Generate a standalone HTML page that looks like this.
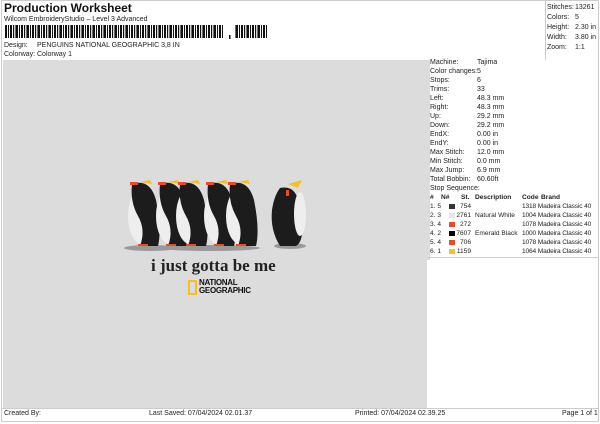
<!DOCTYPE html>
<html><head><style>
*{margin:0;padding:0;box-sizing:border-box}
body{width:600px;height:424px;background:#fff;font-family:"Liberation Sans",sans-serif;font-size:7px;color:#222;position:relative;overflow:hidden}
.a{position:absolute;white-space:nowrap}
.r{position:absolute;left:430px;white-space:nowrap;line-height:9px}
.r span{position:absolute;left:47px}
.t{font-size:6.6px}
</style></head><body>
<div class="a" style="left:1px;top:0;width:598px;height:422px;border:1px solid #ccc"></div>
<div class="a" style="left:4px;top:1px;font-size:12px;font-weight:bold;color:#111">Production Worksheet</div>
<div class="a" style="left:4px;top:16px;font-size:7px">Wilcom EmbroideryStudio – Level 3 Advanced</div>
<svg class="a" style="left:5px;top:25px" width="262" height="15">
<defs><pattern id="b" width="11" height="13" patternUnits="userSpaceOnUse">
<rect x="0" width="2" height="13" fill="#111"/><rect x="3" width="1" height="13" fill="#111"/><rect x="5" width="2" height="13" fill="#111"/><rect x="8" width="1" height="13" fill="#111"/><rect x="9.8" width="0.8" height="13" fill="#111"/></pattern></defs>
<rect x="0" y="0" width="218" height="13" fill="url(#b)"/>
<rect x="224" y="10" width="1.5" height="4" fill="#111"/>
<rect x="230" y="0" width="32" height="13" fill="url(#b)"/>
</svg>
<div class="a" style="left:4px;top:42px">Design:</div>
<div class="a" style="left:37px;top:42px">PENGUINS NATIONAL GEOGRAPHIC 3,8 IN</div>
<div class="a" style="left:4px;top:51px">Colorway:</div>
<div class="a" style="left:37px;top:51px">Colorway 1</div>
<div class="a" style="left:545px;top:0;width:54px;height:60px;border-left:1px solid #ccc"></div>
<div class="a" style="left:547px;top:3px;line-height:10px">Stitches:<br>Colors:<br>Height:<br>Width:<br>Zoom:</div>
<div class="a" style="left:575px;top:3px;line-height:10px">13261<br>5<br>2.30 in<br>3.80 in<br>1:1</div>
<div class="a" style="left:3px;top:60px;width:424px;height:348px;background:#dcdcdc"></div>
<div class="a" style="left:427px;top:60px;width:3px;height:200px;background:#dcdcdc"></div>
<div class="a" style="left:2px;top:408px;width:596px;height:1px;background:#ccc"></div>
<div class="a" style="left:4px;top:410px">Created By:</div>
<div class="a" style="left:149px;top:410px">Last Saved: 07/04/2024 02.01.37</div>
<div class="a" style="left:355px;top:410px">Printed: 07/04/2024 02.39.25</div>
<div class="a" style="left:562px;top:410px">Page 1 of 1</div>
<div class="r" style="top:58px">Machine:<span>Tajima</span></div>
<div class="r" style="top:67px">Color changes:<span>5</span></div>
<div class="r" style="top:76px">Stops:<span>6</span></div>
<div class="r" style="top:85px">Trims:<span>33</span></div>
<div class="r" style="top:94px">Left:<span>48.3 mm</span></div>
<div class="r" style="top:103px">Right:<span>48.3 mm</span></div>
<div class="r" style="top:112px">Up:<span>29.2 mm</span></div>
<div class="r" style="top:121px">Down:<span>29.2 mm</span></div>
<div class="r" style="top:130px">EndX:<span>0.00 in</span></div>
<div class="r" style="top:139px">EndY:<span>0.00 in</span></div>
<div class="r" style="top:148px">Max Stitch:<span>12.0 mm</span></div>
<div class="r" style="top:157px">Min Stitch:<span>0.0 mm</span></div>
<div class="r" style="top:166px">Max Jump:<span>6.9 mm</span></div>
<div class="r" style="top:175px">Total Bobbin:<span>60.60ft</span></div>
<div class="r" style="top:184px">Stop Sequence:</div>
<div class="a t" style="left:428px;top:193px;width:170px;line-height:9px">
<div style="position:relative;height:9px;font-weight:bold;text-decoration:underline"><span class="a" style="left:2px">#</span><span class="a" style="left:13px">N#</span><span class="a" style="left:33px">St.</span><span class="a" style="left:47px">Description</span><span class="a" style="left:94px">Code</span><span class="a" style="left:113px">Brand</span></div>
</div>
<div class="a t" style="left:430px;top:202px;line-height:9px">1. 5<br>2. 3<br>3. 4<br>4. 2<br>5. 4<br>6. 1</div>
<div class="a" style="left:449px;top:204px;width:6px;height:5px;background:#333"></div>
<div class="a" style="left:449px;top:213px;width:6px;height:5px;background:#e4e6ee"></div>
<div class="a" style="left:449px;top:222px;width:6px;height:5px;background:#e84a2a"></div>
<div class="a" style="left:449px;top:231px;width:6px;height:5px;background:#000"></div>
<div class="a" style="left:449px;top:240px;width:6px;height:5px;background:#e84a2a"></div>
<div class="a" style="left:449px;top:249px;width:6px;height:5px;background:#f5c020"></div>
<div class="a t" style="left:456px;top:202px;line-height:9px;text-align:right;width:15px">754<br>2761<br>272<br>7607<br>706<br>1159</div>
<div class="a t" style="left:475px;top:202px;line-height:9px"><br>Natural White<br><br>Emerald Black</div>
<div class="a t" style="left:522px;top:202px;line-height:9px;letter-spacing:-0.15px">1318 Madeira Classic 40<br>1004 Madeira Classic 40<br>1078 Madeira Classic 40<br>1000 Madeira Classic 40<br>1078 Madeira Classic 40<br>1064 Madeira Classic 40</div>
<div class="a" style="left:428px;top:257px;width:170px;height:1px;background:#ccc"></div>
<svg class="a" style="left:110px;top:170px" width="210" height="90">
<g>
<ellipse cx="40" cy="78" rx="26" ry="3" fill="#999"/>
<ellipse cx="100" cy="78" rx="50" ry="3" fill="#999"/>
<ellipse cx="180" cy="76" rx="16" ry="3" fill="#999"/>
</g>
<g id="p">
<ellipse cx="32" cy="46" rx="14" ry="28" fill="#eee"/>
<path d="M22 14 Q40 8 46 30 Q52 60 48 76 L30 76 Q36 60 28 46 Q20 32 22 14Z" fill="#1c1c1c"/>
<rect x="20" y="12" width="8" height="3" fill="#e84a2a"/>
<path d="M30 12 L40 10 L42 14 Z" fill="#f5c020"/>
<rect x="28" y="74" width="10" height="2" fill="#e84a2a"/>
</g>
<use href="#p" x="28"/><use href="#p" x="48"/><use href="#p" x="76"/><use href="#p" x="98"/>
<path d="M170 18 Q188 14 190 40 Q196 70 186 76 L170 76 Q160 60 162 40 Q164 26 170 18Z" fill="#1c1c1c"/>
<ellipse cx="190" cy="44" rx="6" ry="22" fill="#eee"/>
<path d="M178 14 L192 10 L188 18 Z" fill="#f5c020"/>
<rect x="176" y="20" width="3" height="6" fill="#e84a2a"/>
</svg>
<div class="a" style="left:151px;top:256px;font-family:'Liberation Serif',serif;font-weight:bold;font-size:17px;color:#222">i just gotta be me</div>
<div class="a" style="left:188px;top:280px;width:9px;height:15px;border:2px solid #f5c020"></div>
<div class="a" style="left:199px;top:279px;font-weight:bold;font-size:8px;line-height:8px;color:#111;letter-spacing:-0.3px">NATIONAL<br>GEOGRAPHIC</div>
</body></html>
